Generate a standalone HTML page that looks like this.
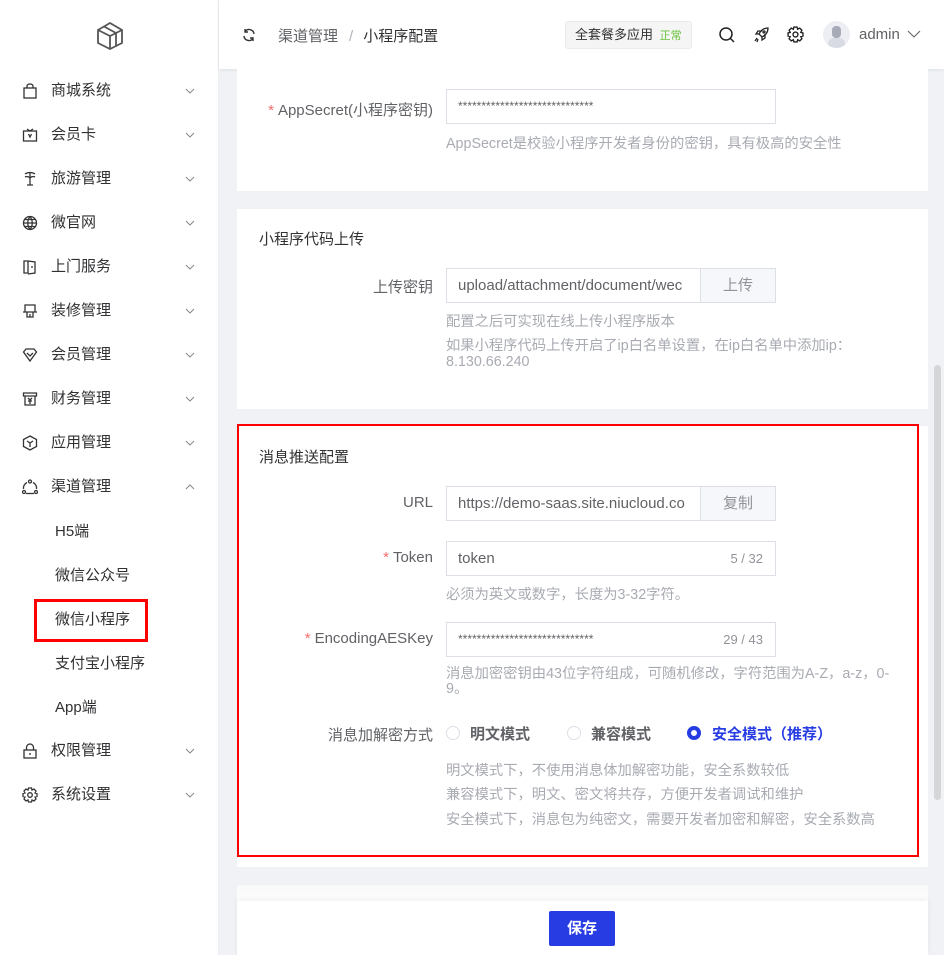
<!DOCTYPE html>
<html><head><meta charset="utf-8"><style>
*{box-sizing:border-box;margin:0;padding:0}
body{width:944px;height:955px;overflow:hidden;background:#f0f2f5;font-family:"Liberation Sans","Noto Sans CJK SC",sans-serif;color:#303133;position:relative;font-size:14px}
.abs{position:absolute}
#side{left:0;top:0;width:219px;height:955px;background:#fff;border-right:1px solid #eceef2}
.mi{position:absolute;left:0;width:219px;height:44px;line-height:44px;font-size:15px;color:#303133}
.mi .ic{position:absolute;left:22px;top:14px;width:16px;height:16px}
.mi .tx{position:absolute;left:51px}
.mi .ch{position:absolute;left:184px;top:16px;width:12px;height:12px}
.sub{position:absolute;left:55px;font-size:15px;line-height:20px;color:#303133}
#hdr{left:219px;top:0;width:725px;height:69px;background:#fff;box-shadow:0 1px 4px rgba(0,21,41,.08)}
.card{position:absolute;left:237px;width:691px;background:#fff}
.lbl{position:absolute;right:511px;font-size:15px;color:#606266;text-align:right;white-space:nowrap}
.lbl .st{color:#f56c6c;margin-right:4px}
.inp{position:absolute;left:446px;width:330px;height:35px;border:1px solid #dcdfe6;background:#fff;font-size:14px;color:#606266;padding-left:11px;line-height:33px;white-space:nowrap;overflow:hidden}
.app{position:absolute;right:0;top:0;width:75px;height:33px;background:#f5f7fa;border-left:1px solid #dcdfe6;color:#909399;text-align:center}
.cnt{position:absolute;right:12px;top:0;font-size:13px;color:#909399}
.help{position:absolute;left:446px;font-size:14.3px;color:#a8abb2;line-height:17px}
.ttl{position:absolute;left:259px;font-size:15px;color:#303133}
.radio{position:absolute;width:14px;height:14px;border:1px solid #dcdfe6;border-radius:50%;background:#fff}
.rt{position:absolute;font-size:15px;font-weight:bold;color:#606266}
</style></head><body>
<div id="side" class="abs">
<svg class="abs" style="left:95px;top:21px" width="30" height="30" viewBox="0 0 30 30" fill="none" stroke="#555" stroke-width="1.8"><path d="M15 2 L27 9 V22 L15 28 L3 22 V9 Z"/><path d="M3 9 L15 15 L27 9 M15 15 V28 M9 5.5 L21 12 V25"/></svg>
<div class="mi" style="top:69px"><svg class="ic" viewBox="0 0 16 16" fill="none" stroke="#333" stroke-width="1.3"><rect x="2" y="5" width="12" height="10"/><path d="M5 5V3a3 2 0 0 1 6 0v2"/></svg><span class="tx">商城系统</span><svg class="ch" viewBox="0 0 12 12" fill="none" stroke="#888" stroke-width="1"><path d="M2 4l4 4 4-4"/></svg></div>
<div class="mi" style="top:113px"><svg class="ic" viewBox="0 0 16 16" fill="none" stroke="#333" stroke-width="1.3"><rect x="1.5" y="4" width="13" height="10"/><path d="M5 2l3 2 3-2M6.5 7l1.5 3 1.5-3"/></svg><span class="tx">会员卡</span><svg class="ch" viewBox="0 0 12 12" fill="none" stroke="#888" stroke-width="1"><path d="M2 4l4 4 4-4"/></svg></div>
<div class="mi" style="top:157px"><svg class="ic" viewBox="0 0 16 16" fill="none" stroke="#333" stroke-width="1.3"><path d="M3 3c3-2 7-2 10 0M8 2v12M5 14h6M3 6c2-1 4 0 5 1M13 6c-2-1-4 0-5 1"/></svg><span class="tx">旅游管理</span><svg class="ch" viewBox="0 0 12 12" fill="none" stroke="#888" stroke-width="1"><path d="M2 4l4 4 4-4"/></svg></div>
<div class="mi" style="top:201px"><svg class="ic" viewBox="0 0 16 16" fill="none" stroke="#333" stroke-width="1.3"><circle cx="8" cy="8" r="6.5"/><path d="M1.5 8h13M8 1.5c-3 4-3 9 0 13M8 1.5c3 4 3 9 0 13M3 4.5h10M3 11.5h10"/></svg><span class="tx">微官网</span><svg class="ch" viewBox="0 0 12 12" fill="none" stroke="#888" stroke-width="1"><path d="M2 4l4 4 4-4"/></svg></div>
<div class="mi" style="top:245px"><svg class="ic" viewBox="0 0 16 16" fill="none" stroke="#333" stroke-width="1.3"><path d="M2 2h4v12H2zM6 2l7 1v11l-7 1M10 7v2"/></svg><span class="tx">上门服务</span><svg class="ch" viewBox="0 0 12 12" fill="none" stroke="#888" stroke-width="1"><path d="M2 4l4 4 4-4"/></svg></div>
<div class="mi" style="top:289px"><svg class="ic" viewBox="0 0 16 16" fill="none" stroke="#333" stroke-width="1.3"><path d="M3 2h10v7H3zM1 9h14M5 9v5h6V9M8 11v3"/></svg><span class="tx">装修管理</span><svg class="ch" viewBox="0 0 12 12" fill="none" stroke="#888" stroke-width="1"><path d="M2 4l4 4 4-4"/></svg></div>
<div class="mi" style="top:333px"><svg class="ic" viewBox="0 0 16 16" fill="none" stroke="#333" stroke-width="1.3"><path d="M1.5 5L4 2h8l2.5 3L8 14z"/><path d="M5 6l3 3 3-3"/></svg><span class="tx">会员管理</span><svg class="ch" viewBox="0 0 12 12" fill="none" stroke="#888" stroke-width="1"><path d="M2 4l4 4 4-4"/></svg></div>
<div class="mi" style="top:377px"><svg class="ic" viewBox="0 0 16 16" fill="none" stroke="#333" stroke-width="1.3"><path d="M1.5 2h13v3h-13zM3 5v9h10V5M6 7l2 2 2-2M8 9v4M6 10h4"/></svg><span class="tx">财务管理</span><svg class="ch" viewBox="0 0 12 12" fill="none" stroke="#888" stroke-width="1"><path d="M2 4l4 4 4-4"/></svg></div>
<div class="mi" style="top:421px"><svg class="ic" viewBox="0 0 16 16" fill="none" stroke="#333" stroke-width="1.3"><path d="M8 1l6.5 3.5v7L8 15l-6.5-3.5v-7z"/><path d="M5 6l3 2 3-2M8 8v4"/></svg><span class="tx">应用管理</span><svg class="ch" viewBox="0 0 12 12" fill="none" stroke="#888" stroke-width="1"><path d="M2 4l4 4 4-4"/></svg></div>
<div class="mi" style="top:465px"><svg class="ic" viewBox="0 0 16 16" fill="none" stroke="#333" stroke-width="1.3"><circle cx="8" cy="2.5" r="1.5"/><circle cx="2" cy="13" r="1.5"/><circle cx="14" cy="13" r="1.5"/><path d="M5 3.5A6 6 0 0 0 1.5 10M11 3.5a6 6 0 0 1 3.5 6.5M4 14.5h8"/></svg><span class="tx">渠道管理</span><svg class="ch" viewBox="0 0 12 12" fill="none" stroke="#888" stroke-width="1"><path d="M2 8l4-4 4 4"/></svg></div>
<div class="sub" style="top:522px">H5端</div>
<div class="sub" style="top:566px">微信公众号</div>
<div class="sub" style="top:610px">微信小程序</div>
<div class="abs" style="left:34px;top:599px;width:114px;height:43px;border:3px solid #f00"></div>
<div class="sub" style="top:654px">支付宝小程序</div>
<div class="sub" style="top:698px">App端</div>
<div class="mi" style="top:729px"><svg class="ic" viewBox="0 0 16 16" fill="none" stroke="#333" stroke-width="1.3"><rect x="2" y="7" width="12" height="8"/><path d="M4.5 7V4.5a3.5 3.5 0 0 1 7 0V7M8 10v2"/></svg><span class="tx">权限管理</span><svg class="ch" viewBox="0 0 12 12" fill="none" stroke="#888" stroke-width="1"><path d="M2 4l4 4 4-4"/></svg></div>
<div class="mi" style="top:773px"><svg class="ic" viewBox="0 0 16 16" fill="none" stroke="#333" stroke-width="1.3"><path d="M6.5 1h3l.5 2 2-1 2 2-1 2 2 .5v3l-2 .5 1 2-2 2-2-1-.5 2h-3l-.5-2-2 1-2-2 1-2-2-.5v-3l2-.5-1-2 2-2 2 1z"/><circle cx="8" cy="8" r="2.3"/></svg><span class="tx">系统设置</span><svg class="ch" viewBox="0 0 12 12" fill="none" stroke="#888" stroke-width="1"><path d="M2 4l4 4 4-4"/></svg></div>
</div>

<div id="hdr" class="abs">
<svg class="abs" style="left:23px;top:28px" width="14" height="14" viewBox="0 0 14 14" fill="none" stroke="#333" stroke-width="1.4"><path d="M12 6A5 5 0 0 0 3 3.5M2 8a5 5 0 0 0 9 2.5M3 1v3h3M11 13v-3H8"/></svg>
<div class="abs" style="left:59px;top:25px;font-size:15px;color:#606266">渠道管理<span style="color:#b0b3b8;margin:0 10px 0 11px">/</span><span style="color:#303133">小程序配置</span></div>
<div class="abs" style="left:346px;top:21px;width:127px;height:28px;background:#f5f5f5;border:1px solid #ebebeb;border-radius:3px;font-size:13px;line-height:26px;padding-left:9px;color:#303133">全套餐多应用 <span style="color:#67c23a;font-size:11px;margin-left:3px">正常</span></div>
<svg class="abs" style="left:499px;top:26px" width="18" height="18" viewBox="0 0 18 18" fill="none" stroke="#222" stroke-width="1.5"><circle cx="8" cy="8" r="6"/><path d="M12.5 12.5L16 16"/></svg>
<svg class="abs" style="left:534px;top:26px" width="17" height="17" viewBox="0 0 17 17" fill="none" stroke="#222" stroke-width="1.3"><path d="M15 2c-4 0-7 2-9 6l3 3c4-2 6-5 6-9zM6 8H3l2-3h4M9 11v3l3-2V8M4 12l-2 3M5 13l-1 3"/><circle cx="11" cy="6" r="1"/></svg>
<svg class="abs" style="left:568px;top:26px" width="17" height="17" viewBox="0 0 16 16" fill="none" stroke="#222" stroke-width="1.3"><path d="M6.5 1h3l.5 2 2-1 2 2-1 2 2 .5v3l-2 .5 1 2-2 2-2-1-.5 2h-3l-.5-2-2 1-2-2 1-2-2-.5v-3l2-.5-1-2 2-2 2 1z"/><circle cx="8" cy="8" r="2.3"/></svg>
<div class="abs" style="left:604px;top:21px;width:27px;height:27px;border-radius:50%;background:#eceef4;overflow:hidden"><div class="abs" style="left:9px;top:5px;width:9px;height:12px;border-radius:4px;background:#a7abb8"></div><div class="abs" style="left:5px;top:17px;width:17px;height:12px;border-radius:8px;background:#d8dbe4"></div></div>
<div class="abs" style="left:640px;top:26px;font-size:15px;color:#606266">admin</div>
<svg class="abs" style="left:688px;top:29px" width="14" height="10" viewBox="0 0 14 10" fill="none" stroke="#666" stroke-width="1.1"><path d="M1 2l6 6 6-6"/></svg>
</div>

<div class="card" style="top:69px;height:122px"></div>
<div class="lbl" style="top:99px"><span class="st">*</span>AppSecret(小程序密钥)</div>
<div class="inp" style="top:89px;font-size:12px">*****************************</div>
<div class="help" style="top:136px">AppSecret是校验小程序开发者身份的密钥，具有极高的安全性</div>

<div class="card" style="top:209px;height:200px"></div>
<div class="ttl" style="top:228px">小程序代码上传</div>
<div class="lbl" style="top:276px">上传密钥</div>
<div class="inp" style="top:268px;font-size:15px">upload/attachment/document/wec<div class="app" style="font-size:15px">上传</div></div>
<div class="help" style="top:314px">配置之后可实现在线上传小程序版本</div>
<div class="help" style="top:338px;width:450px;line-height:16px">如果小程序代码上传开启了ip白名单设置，在ip白名单中添加ip：<br>8.130.66.240</div>

<div class="card" style="top:426px;height:441px"></div>
<div class="abs" style="left:237px;top:424px;width:682px;height:433px;border:2px solid #f00"></div>
<div class="ttl" style="top:446px">消息推送配置</div>
<div class="lbl" style="top:494px">URL</div>
<div class="inp" style="top:486px;font-size:15px">https://demo-saas.site.niucloud.co<div class="app" style="font-size:15px">复制</div></div>
<div class="lbl" style="top:549px"><span class="st">*</span>Token</div>
<div class="inp" style="top:541px;font-size:15px">token<span class="cnt">5 / 32</span></div>
<div class="help" style="top:587px">必须为英文或数字，长度为3-32字符。</div>
<div class="lbl" style="top:630px"><span class="st">*</span>EncodingAESKey</div>
<div class="inp" style="top:622px;font-size:12px">*****************************<span class="cnt" style="font-size:13px">29 / 43</span></div>
<div class="help" style="top:667px;width:450px;line-height:15px">消息加密密钥由43位字符组成，可随机修改，字符范围为A-Z，a-z，0-<br>9。</div>
<div class="lbl" style="top:724px">消息加解密方式</div>
<div class="radio" style="left:446px;top:726px"></div><div class="rt" style="left:470px;top:723px">明文模式</div>
<div class="radio" style="left:567px;top:726px"></div><div class="rt" style="left:591px;top:723px">兼容模式</div>
<div class="radio" style="left:687px;top:726px;border:4px solid #273de3"></div><div class="rt" style="left:712px;top:723px;color:#273de3">安全模式（推荐）</div>
<div class="help" style="top:763px">明文模式下，不使用消息体加解密功能，安全系数较低</div>
<div class="help" style="top:787px">兼容模式下，明文、密文将共存，方便开发者调试和维护</div>
<div class="help" style="top:812px">安全模式下，消息包为纯密文，需要开发者加密和解密，安全系数高</div>

<div class="card" style="top:885px;height:70px;background:linear-gradient(#f8f8f9,#fff 20px)"></div>
<div class="abs" style="left:237px;top:901px;width:691px;height:54px;background:#fff;box-shadow:0 -2px 6px rgba(0,0,0,.05)"></div>
<div class="abs" style="left:549px;top:911px;width:66px;height:35px;background:#273de3;border-radius:2px;color:#fff;font-weight:bold;font-size:15px;text-align:center;line-height:35px">保存</div>

<div class="abs" style="left:934px;top:365px;width:7px;height:435px;background:#d5d6d8;border-radius:4px"></div>
</body></html>
